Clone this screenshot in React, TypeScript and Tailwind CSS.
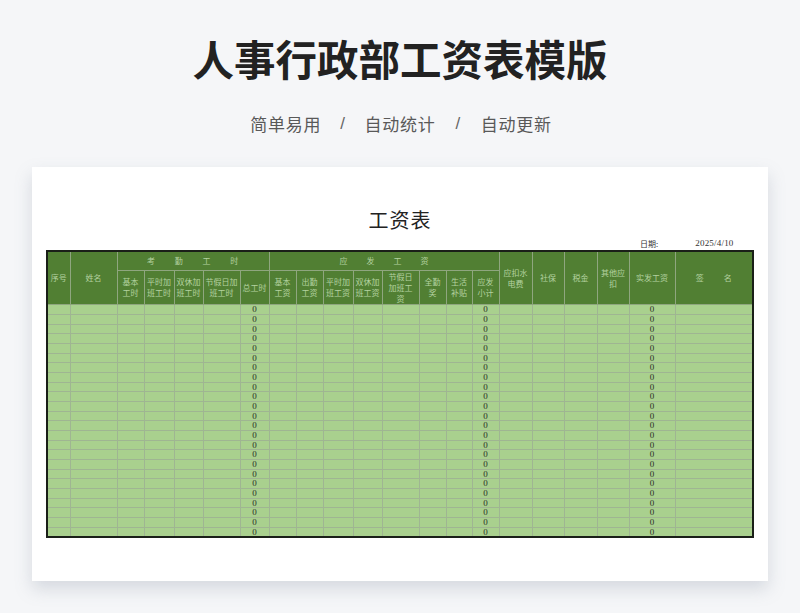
const colWidths = [23, 47, 27, 30, 29, 37, 29, 27, 27, 30, 29, 37, 27, 26, 27, 33, 32, 33, 32, 46, 78]
const totalCols = [6, 14, 19]
const rows = Array.from({ length: 24 }, (_, i) => i)

const th = 'border border-[#8fa67f] bg-[#517f33] font-normal leading-[11px] text-[#b4d2a0] p-0 text-center align-middle'

export default function App() {
  return (
    <div className="min-h-[613px] w-[800px] overflow-hidden bg-[#f5f6f8] font-['Noto_Sans_CJK_SC',sans-serif]">
      <div className="flex flex-col items-center pt-[28px]">
        <h1 className="text-[41.5px] font-bold leading-[60px] text-[#222222]">人事行政部工资表模版</h1>
        <div className="mt-[22px] flex items-center pl-[2px] text-[17px] leading-[28px] tracking-[0.7px] text-[#595959]">
          <span>简单易用</span>
          <span className="mx-[19px] font-['Liberation_Sans',sans-serif] font-light text-[#666666]">/</span>
          <span>自动统计</span>
          <span className="mx-[20px] font-['Liberation_Sans',sans-serif] font-light text-[#666666]">/</span>
          <span>自动更新</span>
        </div>
      </div>

      <div className="mx-[32px] mt-[29px] h-[414px] bg-white px-[14px] pt-[38px] shadow-[0_8px_16px_rgba(120,130,150,0.25)]">
        <div className="text-center text-[20px] leading-[30px] tracking-[1px] text-[#222222]">工资表</div>
        <div className="mt-[2px] flex h-[13px] items-center text-[8px] text-[#333333]">
          <span className="ml-[594px]">日期:</span>
          <span className="ml-[37px] font-['Liberation_Serif',serif] text-[9px] tracking-[0.2px]">2025/4/10</span>
        </div>
        <table className="w-[708px] table-fixed border-2 border-[#1a1f18] text-[8px]">
          <colgroup>
            {colWidths.map((w, i) => (
              <col key={i} style={{ width: w }} />
            ))}
          </colgroup>
          <thead>
            <tr className="h-[19px]">
              <th rowSpan={2} className={th}>序号</th>
              <th rowSpan={2} className={th}>姓名</th>
              <th colSpan={5} className={th + ' tracking-[0.1em]'}>
                <span className="inline-flex gap-[19px]"><span>考</span><span>勤</span><span>工</span><span>时</span></span>
              </th>
              <th colSpan={8} className={th}>
                <span className="inline-flex gap-[19px]"><span>应</span><span>发</span><span>工</span><span>资</span></span>
              </th>
              <th rowSpan={2} className={th}>应扣水<br />电费</th>
              <th rowSpan={2} className={th}>社保</th>
              <th rowSpan={2} className={th}>税金</th>
              <th rowSpan={2} className={th}>其他应<br />扣</th>
              <th rowSpan={2} className={th}>实发工资</th>
              <th rowSpan={2} className={th}>
                <span className="inline-flex gap-[20px]"><span>签</span><span>名</span></span>
              </th>
            </tr>
            <tr className="h-[32px]">
              <th className={th}>基本<br />工时</th>
              <th className={th}>平时加<br />班工时</th>
              <th className={th}>双休加<br />班工时</th>
              <th className={th}>节假日加<br />班工时</th>
              <th className={th}>总工时</th>
              <th className={th}>基本<br />工资</th>
              <th className={th}>出勤<br />工资</th>
              <th className={th}>平时加<br />班工资</th>
              <th className={th}>双休加<br />班工资</th>
              <th className={th}>节假日<br />加班工<br />资</th>
              <th className={th}>全勤<br />奖</th>
              <th className={th}>生活<br />补贴</th>
              <th className={th}>应发<br />小计</th>
            </tr>
          </thead>
          <tbody>
            {rows.map((r) => (
              <tr key={r}>
                {colWidths.map((_, c) => (
                  <td
                    key={c}
                    className={
                      "border border-[#9fb592] bg-[#a9d08e] p-0 text-center font-['Liberation_Serif',serif] text-[9px] leading-[8px] text-[#2a2f26] " +
                      (r % 3 === 2 ? 'h-[9px]' : 'h-[10px]')
                    }
                  >
                    {totalCols.includes(c) ? 0 : ''}
                  </td>
                ))}
              </tr>
            ))}
          </tbody>
        </table>
      </div>
    </div>
  )
}
